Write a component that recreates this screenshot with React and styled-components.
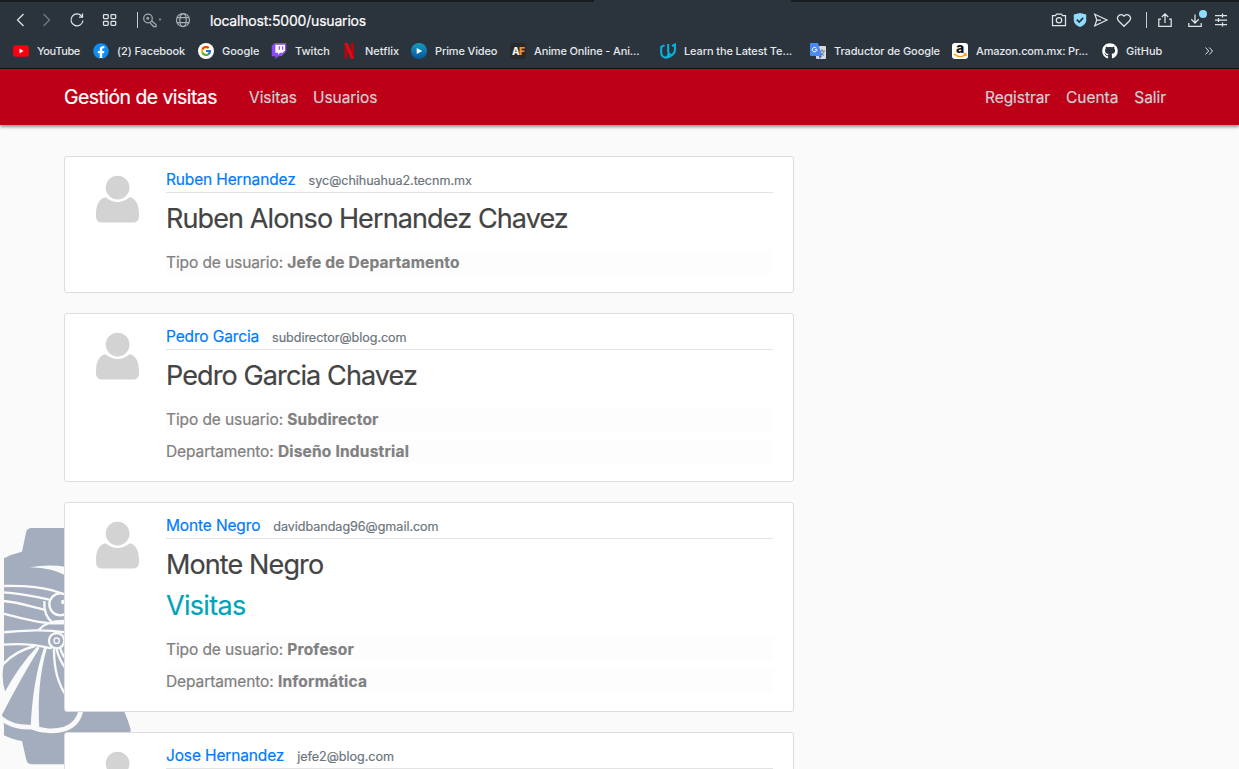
import React from "react";
import styled, { createGlobalStyle } from "styled-components";
import { FaFacebook, FaGithub, FaTwitch } from "react-icons/fa";
import { FcGoogle } from "react-icons/fc";

const GlobalStyle = createGlobalStyle`
  * { box-sizing: border-box; }
  body {
    margin: 0;
    height: 769px;
    overflow: hidden;
    background: #fafafa;
    color: #333;
    font-family: Inter, "Liberation Sans", sans-serif;
    font-size: 15.5px;
    line-height: 24px;
    -webkit-text-stroke: 0.2px;
  }
  a { text-decoration: none; color: inherit; }
`;

const Window = styled.div`
  position: relative;
  height: 769px;
  overflow: hidden;
`;

/* Browser chrome */
const Chrome = styled.header`
  height: 69px;
  background: #2b343d;
  border-bottom: 1px solid #10161c;
`;

const TabStrip = styled.div`
  height: 2px;
  background: #171c21;
  display: flex;
`;

const ActiveTab = styled.div`
  width: 197px;
  margin-left: 594px;
  background: #2b343d;
`;

const Toolbar = styled.div`
  height: 36px;
  padding-right: 10px;
  display: flex;
  align-items: center;
`;

const ToolIcon = styled.svg`
  display: block;
  flex: none;
  width: 16px;
  height: 16px;
  margin-left: ${(p) => p.$gap}px;
  fill: none;
  stroke: ${(p) => p.$color || "#dfe3e6"};
  stroke-width: 1.25;
  overflow: visible;
`;

const Divider = styled.span`
  width: 1px;
  height: 16px;
  margin-left: ${(p) => p.$gap}px;
  background: #c3c9ce;
`;

const Address = styled.span`
  margin-left: 19px;
  flex: 1;
  color: #fff;
  font-size: 14px;
  letter-spacing: -0.19px;
  line-height: 18px;
  padding-top: 1px;
`;

const Bookmarks = styled.nav`
  height: 26px;
  display: grid;
  grid-template-columns: 80px 105px 73px 70px 70px 99px 150px 150px 142px 150px 103px auto;
  padding-left: 13px;
  align-items: center;
  -webkit-text-stroke: 0;
`;

const Bookmark = styled.a`
  display: flex;
  align-items: center;
  gap: 8px;
  color: #e4e8eb;
  font-size: 11px;
  font-weight: 500;
  line-height: 16px;
  letter-spacing: ${(p) => p.$track || 0}px;
  white-space: nowrap;
  svg { display: block; flex: none; }
`;

const AmazonTile = styled.span`
  position: relative;
  width: 16px;
  height: 16px;
  border-radius: 3px;
  background: #fff;
  color: #111;
  font-size: 14px;
  font-weight: 800;
  line-height: 9px;
  text-align: center;
  svg { position: absolute; left: 0; top: 0; }
`;

const AnimeTile = styled.span`
  width: 16px;
  height: 16px;
  border-radius: 3px;
  background: #2a2828;
  color: #f3efe9;
  font-size: 10px;
  font-weight: 800;
  letter-spacing: -0.7px;
  text-align: center;
  b { color: #f0932f; }
`;

const FacebookTile = styled.span`
  display: flex;
  border-radius: 50%;
  background: radial-gradient(#fff 60%, transparent 62%);
  color: #0f8df2;
`;

/* Application */
const Navbar = styled.nav`
  position: relative;
  height: 56px;
  padding: 0 73px 0 64px;
  display: flex;
  align-items: center;
  background: #bd0017;
  box-shadow: 0 2px 3px rgba(0, 0, 0, 0.42);
`;

const Brand = styled.a`
  width: 185px;
  color: #fff;
  font-size: 19.4px;
  letter-spacing: -0.52px;
`;

const NavGroup = styled.div`
  display: flex;
  gap: 16px;
  padding-top: 2px;
  margin-left: ${(p) => (p.$end ? "auto" : "0")};
  color: #d3cfd5;
  letter-spacing: -0.06px;
`;

const Watermark = styled.svg`
  position: absolute;
  left: 0;
  top: 500px;
  width: 140px;
  height: 269px;
`;

const Feed = styled.main`
  position: relative;
  width: 730px;
  margin: 31px 0 0 64px;
  display: flex;
  flex-direction: column;
  gap: 20px;
`;

const Card = styled.article`
  display: flex;
  gap: 16px;
  padding: 10px 20px;
  background: #fff;
  border: 1px solid #dddddd;
  border-radius: 3px;
`;

const Avatar = styled.svg`
  display: block;
  flex: none;
  width: 65px;
  height: 65px;
`;

const Body = styled.div`
  flex: 1;
`;

const Meta = styled.div`
  height: 26px;
  padding-top: 1px;
  margin-bottom: 9px;
  border-bottom: 1px solid #e3e3e3;
  display: flex;
  align-items: baseline;
  gap: 13px;
`;

const UserLink = styled.a`
  color: #007bff;
  letter-spacing: -0.14px;
`;

const Email = styled.small`
  color: #6c757d;
  font-size: 12.6px;
  letter-spacing: -0.05px;
`;

const Title = styled.h2`
  margin: 0 0 8px;
  color: ${(p) => (p.$link ? "#00a4b8" : "#444")};
  font-size: 27px;
  font-weight: 400;
  line-height: 33px;
  letter-spacing: ${(p) => (p.$link ? "-0.7px" : "-0.89px")};
`;

const Details = styled.div`
  display: flex;
  flex-direction: column;
  gap: 8px;
  padding: 7px 0 8px;
`;

const Detail = styled.p`
  margin: 0;
  height: 24px;
  background: #fdfdfd;
  color: #808080;
  line-height: 26px;
  letter-spacing: -0.1px;
  b { letter-spacing: 0.2px; }
`;

function PersonAvatar() {
  return (
    <Avatar viewBox="0 0 65 65" fill="#d3d3d3">
      <circle cx="32.6" cy="20.6" r="11.9" />
      <path d="M20.5 30.2Q26 35 32.6 35T44.7 30.2C50.5 31.2 54 37.5 54 47v2.5Q54 55.5 47.5 55.5h-30Q11 55.5 11 49.5V47C11 37.500 14.500 31.200 20.500 30.200Z" />
    </Avatar>
  );
}

function EagleGear() {
  return (
    <Watermark viewBox="0 0 420 807">
      <path fill="#a3adbd" d="M420 84H95Q81 84 78 98L66 155Q35 162 12 175V493Q2 530 16 578L6 636Q5 660 12 674V706Q40 720 66 723L79 780Q82 793 96 793H340V697H386Q394 697 392 687Q384 660 373 635H340V84Z" />
      <g fill="none" stroke="#fafafa" strokeWidth="7">
        <path fill="#fafafa" stroke="none" d="M90 202Q145 192 200 201V228Q160 204 90 202Z" />
        <path d="M10 258C75 257 135 259 200 286M10 277C60 279 100 288 148 299M10 303C60 307 95 321 133 329M10 341C65 354 130 376 200 369M10 397C65 393 120 386 200 397M115 391Q140 360 200 363M10 434C65 429 115 435 155 445M10 492C35 465 62 449 105 438" />
        <circle cx="181" cy="313" r="33" fill="#a3adbd" />
        <path d="M133 303Q130 348 160 370" />
        <circle cx="170" cy="422" r="23" fill="#a3adbd" />
        <circle cx="170" cy="422" r="8" strokeWidth="4" />
        <circle cx="190" cy="306" r="7" fill="#fafafa" stroke="none" />
        <path d="M162 448C162 510 174 550 200 590M170 448Q177 480 200 510M180 443Q188 468 200 480" />
        <path fill="#fafafa" stroke="none" d="M111 440L119 443Q65 530 4 648V622L13 578Q57 497 111 440Z" />
        <path fill="#fafafa" stroke="none" d="M132 443H141C119 520 113 590 118 686H92C95 600 108 512 132 443Z" />
        <path strokeWidth="14" d="M2 654Q38 684 95 681C125 694 164 696 194 687Q235 673 243 630" />
      </g>
    </Watermark>
  );
}

const users = [
  { name: "Ruben Hernandez", email: "syc@chihuahua2.tecnm.mx", full: "Ruben Alonso Hernandez Chavez", role: "Jefe de Departamento" },
  { name: "Pedro Garcia", email: "subdirector@blog.com", full: "Pedro Garcia Chavez", role: "Subdirector", dept: "Diseño Industrial" },
  { name: "Monte Negro", email: "davidbandag96@gmail.com", full: "Monte Negro", role: "Profesor", dept: "Informática", visits: true },
  { name: "Jose Hernandez", email: "jefe2@blog.com" },
];

function UserCard({ user }) {
  return (
    <Card>
      <PersonAvatar />
      <Body>
        <Meta>
          <UserLink href="#">{user.name}</UserLink>
          <Email>{user.email}</Email>
        </Meta>
        {user.full && <Title>{user.full}</Title>}
        {user.visits && <Title $link>Visitas</Title>}
        {user.role && (
          <Details>
            <Detail>Tipo de usuario: <b>{user.role}</b></Detail>
            {user.dept && <Detail>Departamento: <b>{user.dept}</b></Detail>}
          </Details>
        )}
      </Body>
    </Card>
  );
}

function BrowserToolbar() {
  return (
    <Toolbar>
      <ToolIcon $gap={12}><path d="M11.500 2L5.500 8L11.500 14" /></ToolIcon>
      <ToolIcon $gap={11} $color="#737b82"><path d="M4.500 2L10.500 8L4.500 14" /></ToolIcon>
      <ToolIcon $gap={14}><path d="M13 4.500A6 6 0 1 0 14 8.500M13.500 1.500V5H10" /></ToolIcon>
      <ToolIcon $gap={17}>
        <rect x="1.500" y="2.500" width="4.700" height="4" rx=".7" /><rect x="9" y="2.500" width="4.700" height="4" rx=".7" />
        <rect x="1.500" y="9.300" width="4.700" height="4" rx=".7" /><rect x="9" y="9.300" width="4.700" height="4" rx=".7" />
      </ToolIcon>
      <Divider $gap={19} />
      <ToolIcon $gap={4} $color="#a2a9af">
        <circle cx="6" cy="6.500" r="4.300" /><circle cx="5.800" cy="6.300" r=".9" />
        <path d="M9.400 8.700L14 12.500V14.500H11.500L7.600 10.400" />
        <circle cx="18" cy="7.500" r="1.200" fill="#737b82" stroke="none" />
      </ToolIcon>
      <ToolIcon $gap={17} $color="#a7aeb4">
        <circle cx="8" cy="8" r="6.500" /><ellipse cx="8" cy="8" rx="3.200" ry="6.500" />
        <path d="M2.300 5.500H13.700M2.300 10.500H13.700" />
      </ToolIcon>
      <Address>localhost:5000/usuarios</Address>
      <ToolIcon $gap={0}>
        <path d="M1.500 3.500H4.500L5.500 2H10.500L11.500 3.500H14.500V13.500H1.500Z" /><circle cx="8" cy="8.200" r="2.700" />
      </ToolIcon>
      <ToolIcon $gap={5} $color="none">
        <path fill="#8fdcff" d="M8 1L14.200 2.500V8.500Q14 12.500 8 15Q2 12.500 1.800 8.500V2.500Z" />
        <path stroke="#2b343d" strokeWidth="1.700" d="M4.800 7.700L7.200 10L11.200 5.800" />
      </ToolIcon>
      <ToolIcon $gap={5}><path d="M1.800 2.300L14 8L1.800 13.700L3.800 8ZM3.800 8H8" /></ToolIcon>
      <ToolIcon $gap={7}><path d="M8 14.300L2.700 9C-.7 5.300 4.700-.3 8 4.200C11.300-.3 16.700 5.300 13.300 9Z" /></ToolIcon>
      <Divider $gap={14} />
      <ToolIcon $gap={10}><path d="M4 7H1.800V14.300H14.200V7H12M8 11V2M4.800 5L8 1.800L11.200 5" /></ToolIcon>
      <ToolIcon $gap={14}>
        <path d="M1.800 11V14.300H14.200V11M8 2.500V11M4.300 7.300L8 11L11.700 7.300" />
        <circle cx="16" cy="2" r="4" fill="#8fdcff" stroke="none" />
      </ToolIcon>
      <ToolIcon $gap={10}><path d="M2 3.500H14M2 8H14M2 12.500H14M9.500 1.500V5.500M5.500 6V10M9.500 10.500V14.500" /></ToolIcon>
    </Toolbar>
  );
}

function BookmarkBar() {
  return (
    <Bookmarks>
      <Bookmark $track={-0.4}><svg width="16" height="16"><rect y="2.300" width="16" height="11.400" rx="3" fill="#f9000f" /><path d="M6.500 5.600V10.400L10.500 8Z" fill="#fff" /></svg>YouTube</Bookmark>
      <Bookmark $track={-0.1}><FacebookTile><FaFacebook size={16} /></FacebookTile>(2) Facebook</Bookmark>
      <Bookmark>
        <svg width="16" height="16"><circle cx="8" cy="8" r="8" fill="#fff" /><FcGoogle x="2" y="2" size={12} /></svg>Google
      </Bookmark>
      <Bookmark><svg width="16" height="16"><path d="M4 1.500H14V9L10 13H4Z" fill="#fff" /><FaTwitch size={16} color="#9147ff" /></svg>Twitch</Bookmark>
      <Bookmark><svg width="16" height="16"><path d="M3.500 0H6.500V15.500L3.500 16ZM10 0H13V16L10 15.500Z" fill="#b00710" /><path d="M3.500 0H6.800L13 16L9.700 15.500Z" fill="#e50914" /></svg>Netflix</Bookmark>
      <Bookmark $track={-0.14}>
        <svg width="16" height="16">
          <defs><linearGradient id="prime" x2="0" y2="1"><stop stopColor="#159bc0" /><stop offset="1" stopColor="#06569c" /></linearGradient></defs>
          <circle cx="8" cy="8" r="8" fill="url(#prime)" /><path d="M5.700 5V11L11.200 8Z" fill="#fff" />
        </svg>Prime Video
      </Bookmark>
      <Bookmark $track={-0.13}><AnimeTile>A<b>F</b></AnimeTile>Anime Online - Ani...</Bookmark>
      <Bookmark $track={-0.12}>
        <svg width="16" height="16" fill="none" stroke="#08b3db" strokeWidth="2">
          <path d="M4.200 2.300L1.200 3.800V9.500Q1.200 13.500 5.500 14.800Q9 14.800 11.800 12.300Q15 10 15 6.500V1.500L12 3M8.200 1V8.500Q8.200 11.500 11.500 12M4.200 2.300V3M5.500 14.800Q8 14 8.600 11" />
        </svg>Learn the Latest Te...
      </Bookmark>
      <Bookmark $track={-0.11}>
        <svg width="16" height="16">
          <rect x="6" y="3" width="10" height="13" rx="1" fill="#d7d9dc" />
          <path d="M9 8H15M12 6.500V8M10 8.500Q11 11 14 12.500M14 8.500Q13 11 10 12.500" stroke="#6b7785" fill="none" />
          <path d="M9 13H12L9.500 16Z" fill="#3367d6" />
          <path d="M1 0H8L12 13H1Q0 13 0 12V1Q0 0 1 0Z" fill="#4a8af4" />
          <path d="M6.300 5.100A2.300 2.300 0 1 0 6.900 6.700H4.800" stroke="#fff" fill="none" />
        </svg>Traductor de Google
      </Bookmark>
      <Bookmark $track={-0.17}>
        <AmazonTile>a<svg width="16" height="16"><path d="M2 11Q8 16 13.500 11.500M11.500 11H14V13" stroke="#f90" strokeWidth="1.400" fill="none" /></svg></AmazonTile>
        Amazon.com.mx: Pr...
      </Bookmark>
      <Bookmark><FaGithub size={16} color="#fff" />GitHub</Bookmark>
      <Bookmark><svg width="8" height="16" fill="none" stroke="#dfe3e6"><path d="M.500 4.500L3.700 8L.500 11.500M4.300 4.500L7.500 8L4.300 11.500" /></svg></Bookmark>
    </Bookmarks>
  );
}

export default function App() {
  return (
    <Window>
      <GlobalStyle />
      <Chrome>
        <TabStrip><ActiveTab /></TabStrip>
        <BrowserToolbar />
        <BookmarkBar />
      </Chrome>
      <Navbar>
        <Brand href="#">Gestión de visitas</Brand>
        <NavGroup><a href="#">Visitas</a><a href="#">Usuarios</a></NavGroup>
        <NavGroup $end><a href="#">Registrar</a><a href="#">Cuenta</a><a href="#">Salir</a></NavGroup>
      </Navbar>
      <EagleGear />
      <Feed>
        {users.map((user) => <UserCard key={user.name} user={user} />)}
      </Feed>
    </Window>
  );
}
